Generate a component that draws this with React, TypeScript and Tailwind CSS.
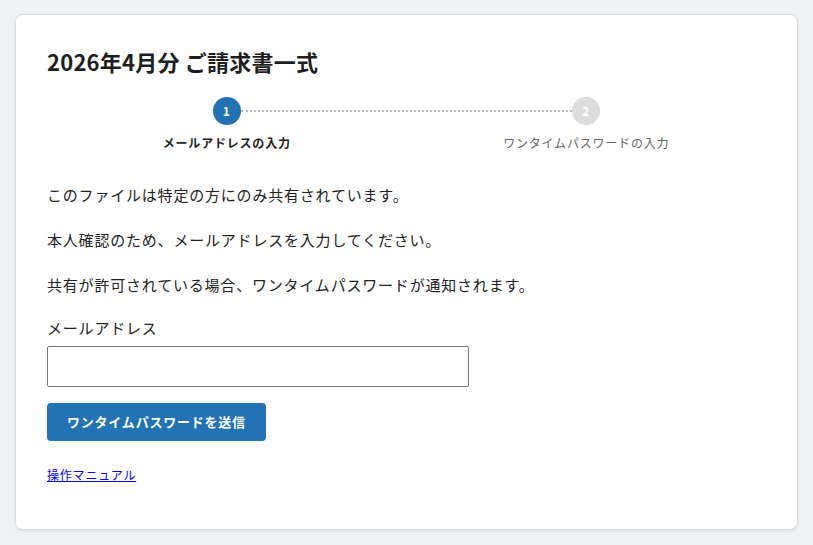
import React from "react";

export default function App() {
  return (
    <div
      className="min-h-[545px] w-full bg-[#f0f1f5] px-[15px] pt-[14px] pb-[15px] tracking-[0.05em] text-[#222]"
      style={{ fontFamily: '"Noto Sans CJK JP", "Noto Sans", sans-serif' }}
    >
      <div className="rounded-[8px] border border-[#dcdde2] bg-white px-[31px] pt-[30px] pb-[44px] shadow-[0_1px_3px_rgba(0,0,0,0.08)]">
        <h1 className="text-[22px] font-bold leading-[32px] tracking-[0.01em] text-[#1e1e1e]">
          2026年4月分 ご請求書一式
        </h1>

        <div className="relative mt-[20px] grid grid-cols-2">
          <div className="absolute left-[194px] right-[194px] top-[13px] border-t-2 border-dotted border-[#b8b8b8]" />
          <div className="relative flex flex-col items-center">
            <div className="flex h-[28px] w-[28px] items-center justify-center rounded-full bg-[#2272b4] text-[12px] font-bold text-white">
              1
            </div>
            <div className="mt-[9px] text-[12px] font-bold leading-[18px] text-[#222]">
              メールアドレスの入力
            </div>
          </div>
          <div className="relative flex flex-col items-center">
            <div className="flex h-[28px] w-[28px] items-center justify-center rounded-full bg-[#dcdcdc] text-[12px] font-bold text-white">
              2
            </div>
            <div className="mt-[9px] text-[12px] leading-[18px] text-[#666]">
              ワンタイムパスワードの入力
            </div>
          </div>
        </div>

        <div className="mt-[31px] flex flex-col gap-[21px] text-[15px] leading-[24px]">
          <p>このファイルは特定の方にのみ共有されています。</p>
          <p>本人確認のため、メールアドレスを入力してください。</p>
          <p>共有が許可されている場合、ワンタイムパスワードが通知されます。</p>
        </div>

        <div className="mt-[19px] text-[15px] leading-[24px]">メールアドレス</div>
        <input
          type="email"
          className="mt-[6px] block h-[41px] w-[422px] rounded-[2px] border border-[#767676] bg-white px-2 outline-none"
        />

        <button className="mt-[16px] block h-[38px] rounded-[4px] bg-[#2272b4] px-[20px] text-[13px] font-bold tracking-[0.06em] text-white">
          ワンタイムパスワードを送信
        </button>

        <a
          href="#"
          className="mt-[25px] inline-block text-[12px] leading-[18px] text-[#0000ee] underline"
        >
          操作マニュアル
        </a>
      </div>
    </div>
  );
}
